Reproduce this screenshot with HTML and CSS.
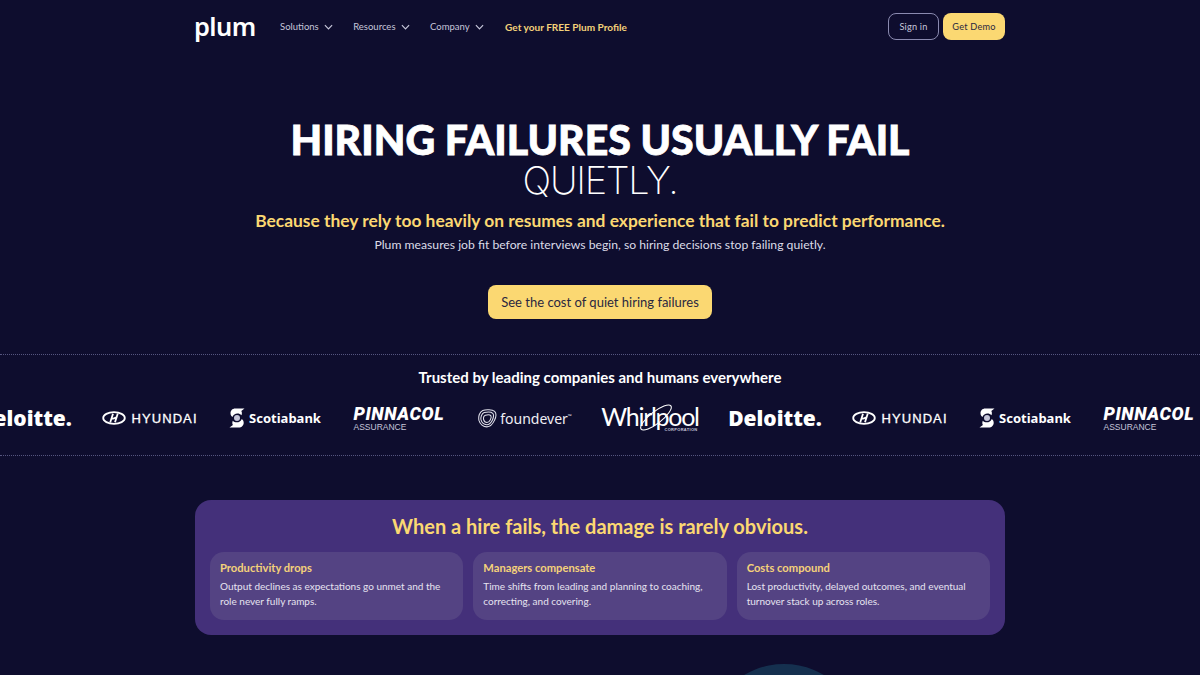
FILE: index.html
```html
<!DOCTYPE html>
<html lang="en">

<head>
    <meta charset="UTF-8">
    <title>Plum - Hiring failures usually fail quietly</title>
    <link rel="stylesheet" href="styles.css">
</head>

<body>

    <!-- Top Nav -->
    <header class="nav">
        <div class="nav-left">
            <a href="#" class="nav-logo">plum</a>
            <a href="#" class="nav-link">Solutions
                <svg class="chevron" viewBox="0 0 10 6"><path d="M1 1l4 4 4-4"/></svg>
            </a>
            <a href="#" class="nav-link">Resources
                <svg class="chevron" viewBox="0 0 10 6"><path d="M1 1l4 4 4-4"/></svg>
            </a>
            <a href="#" class="nav-link">Company
                <svg class="chevron" viewBox="0 0 10 6"><path d="M1 1l4 4 4-4"/></svg>
            </a>
            <a href="#" class="nav-promo">Get your FREE Plum Profile</a>
        </div>
        <div class="nav-right">
            <a href="#" class="btn-signin">Sign in</a>
            <a href="#" class="btn-demo">Get Demo</a>
        </div>
    </header>

    <!-- Hero -->
    <section class="hero">
        <h1 class="hero-title">HIRING FAILURES USUALLY FAIL</h1>
        <div class="hero-thin">QUIETLY.</div>
        <p class="hero-lead">Because they rely too heavily on resumes and experience that fail to predict performance.</p>
        <p class="hero-sub">Plum measures job fit before interviews begin, so hiring decisions stop failing quietly.</p>
        <a href="#" class="hero-btn">See the cost of quiet hiring failures</a>
    </section>

    <!-- Logo Strip -->
    <section class="trusted">
        <h2>Trusted by leading companies and humans everywhere</h2>
        <div class="logo-track">
            <div class="logo-cell"><span class="logo-deloitte">Deloitte.</span></div>
            <div class="logo-cell">
                <svg class="hyundai-mark" viewBox="0 0 24 14"><ellipse cx="12" cy="7" rx="10.800" ry="5.800"/><path d="M8.200 11.500L11 2.800M13 11.200l2.800-8.700M9.500 7.900c1.800-.2 3.300-.7 5-1.700"/></svg>
                <span class="logo-hyundai">HYUNDAI</span>
            </div>
            <div class="logo-cell">
                <svg class="scotia-mark" viewBox="0 0 16 20"><path d="M15.500 0.500H6.500C3 0.500 1.500 2.800 1.500 5.200c0 1.800.8 3 1.900 3.800 1-2.200 2.800-3.400 5-3.400 1.700 0 3 .6 4 1.600.4-.8.500-1.500.500-2.300 0-.8-.2-1.500-.6-2z"/><path d="M.5 19.500h9c3.500 0 5.200-2.300 5.200-4.800 0-1.800-.8-3-1.900-3.800-1 2.200-2.800 3.400-5 3.400-1.700 0-3-.6-4-1.600-.4.8-.5 1.500-.5 2.300 0 .8.200 1.500.6 2z"/><circle cx="8" cy="10" r="3" class="scotia-globe"/></svg>
                <span class="logo-scotia">Scotiabank</span>
            </div>
            <div class="logo-cell logo-stack">
                <span class="logo-pinnacol">PINNACOL</span>
                <span class="logo-assurance">ASSURANCE</span>
            </div>
            <div class="logo-cell">
                <svg class="foundever-mark" viewBox="0 0 20 20"><path d="M5 1.500c3.500-1.200 10-1 12.500 1 2 2 1.500 6-.2 9.500-1.600 3.500-4.300 6.800-8 6.800C5.800 18.800 2 16 1 12 .2 8 1.500 3 5 1.500z"/><path d="M6.500 3.800c3-.8 7.500-.7 9 .7 1.300 1.500.9 4.300-.3 7-1.300 2.800-3.400 5-6 5-2.500 0-5.200-2-6-5-.6-3 .7-6.700 3.300-7.700z"/><path d="M7.800 6.500c2.200-.5 5-.4 5.700.5.700 1 .3 2.700-.5 4.300-.9 1.800-2.100 3-3.600 3-1.500 0-3-1.200-3.500-3-.3-1.900.3-4.200 1.900-4.800z"/></svg>
                <span class="logo-foundever">foundever<sup>™</sup></span>
            </div>
            <div class="logo-cell logo-whirlpool-cell">
                <span class="logo-whirlpool">Whirlpool</span>
                <span class="logo-corp">CORPORATION</span>
                <svg class="whirlpool-swoosh" viewBox="0 0 40 34"><ellipse cx="20" cy="17" rx="21" ry="6.500" transform="rotate(-38 20 17)"/></svg>
            </div>
            <div class="logo-cell"><span class="logo-deloitte">Deloitte.</span></div>
            <div class="logo-cell">
                <svg class="hyundai-mark" viewBox="0 0 24 14"><ellipse cx="12" cy="7" rx="10.800" ry="5.800"/><path d="M8.200 11.500L11 2.800M13 11.200l2.800-8.700M9.500 7.900c1.800-.2 3.300-.7 5-1.700"/></svg>
                <span class="logo-hyundai">HYUNDAI</span>
            </div>
            <div class="logo-cell">
                <svg class="scotia-mark" viewBox="0 0 16 20"><path d="M15.500 0.500H6.500C3 0.500 1.500 2.800 1.500 5.200c0 1.800.8 3 1.900 3.800 1-2.200 2.800-3.400 5-3.400 1.700 0 3 .6 4 1.600.4-.8.500-1.500.500-2.300 0-.8-.2-1.500-.6-2z"/><path d="M.5 19.500h9c3.500 0 5.200-2.300 5.200-4.800 0-1.800-.8-3-1.900-3.800-1 2.200-2.800 3.400-5 3.400-1.700 0-3-.6-4-1.600-.4.8-.5 1.500-.5 2.300 0 .8.200 1.500.6 2z"/><circle cx="8" cy="10" r="3" class="scotia-globe"/></svg>
                <span class="logo-scotia">Scotiabank</span>
            </div>
            <div class="logo-cell logo-stack">
                <span class="logo-pinnacol">PINNACOL</span>
                <span class="logo-assurance">ASSURANCE</span>
            </div>
        </div>
    </section>

    <!-- Damage Panel -->
    <section class="damage">
        <h2>When a hire fails, the damage is rarely obvious.</h2>
        <div class="damage-grid">
            <div class="damage-card">
                <h3>Productivity drops</h3>
                <p>Output declines as expectations go unmet and the role never fully ramps.</p>
            </div>
            <div class="damage-card">
                <h3>Managers compensate</h3>
                <p>Time shifts from leading and planning to coaching, correcting, and covering.</p>
            </div>
            <div class="damage-card">
                <h3>Costs compound</h3>
                <p>Lost productivity, delayed outcomes, and eventual turnover stack up across roles.</p>
            </div>
        </div>
    </section>

    <!-- Next section, cut off by the fold -->
    <div class="next-peek"><div class="peek-circle"></div></div>

</body>

</html>
```

FILE: styles.css
```css
/* Global Styles */
html, body {
    height: 675px;
    overflow: hidden;
}

body {
    font-family: 'Lato', sans-serif;
    background: #0e0d2e;
    color: #fff;
    margin: 0;
}

a {
    text-decoration: none;
}

/* Top Nav */
.nav {
    width: 810px;
    height: 53px;
    margin: 0 auto;
    display: flex;
    align-items: center;
    justify-content: space-between;
}

.nav-left {
    display: flex;
    align-items: center;
}

.nav-logo {
    width: 85px;
    margin-left: -1px;
    margin-right: 1px;
    font-family: 'Noto Sans', sans-serif;
    font-size: 25.500px;
    font-weight: 600;
    line-height: 29px;
    letter-spacing: -0.6px;
    color: #fff;
}

.nav-link {
    display: flex;
    align-items: center;
    gap: 5px;
    margin-right: 20.500px;
    font-size: 9.500px;
    color: #c6c6da;
}

.chevron {
    width: 9px;
    height: 6px;
    fill: none;
    stroke: #c6c6da;
    stroke-width: 1.300;
}

.nav-promo {
    margin-left: 1px;
    font-size: 10.050px;
    font-weight: 700;
    color: #f4d27a;
}

.nav-right {
    display: flex;
    gap: 4px;
}

.btn-signin,
.btn-demo {
    height: 27px;
    display: flex;
    align-items: center;
    justify-content: center;
    box-sizing: border-box;
    border-radius: 8px;
    font-size: 9.200px;
    letter-spacing: 0.2px;
}

.btn-signin {
    width: 51px;
    border: 1px solid #8a8ab0;
    color: #c6c6da;
}

.btn-demo {
    width: 62px;
    background: #fbd872;
    color: #2a2740;
}

/* Hero */
.hero {
    height: 302px;
    box-sizing: border-box;
    padding-top: 66px;
    text-align: center;
    border-bottom: 1px dotted #55557f;
}

.hero-title {
    margin: 0;
    font-size: 41px;
    line-height: 41px;
    font-weight: 900;
    -webkit-text-stroke: 0.8px #fff;
}

.hero-thin {
    font-family: 'Inter', sans-serif;
    font-size: 38px;
    line-height: 40px;
    font-weight: 150;
    letter-spacing: -1.300px;
}

.hero-lead {
    margin: 9px 0 0;
    font-size: 17.400px;
    line-height: 24px;
    font-weight: 700;
    color: #fbd872;
}

.hero-sub {
    margin: 2px 0 0;
    font-size: 12.200px;
    line-height: 20px;
    color: #dcdce8;
}

.hero-btn {
    display: inline-block;
    margin-top: 30px;
    width: 224px;
    height: 34px;
    line-height: 34px;
    border-radius: 8px;
    background: #fbd872;
    color: #2a2740;
    font-size: 13px;
}

/* Logo Strip */
.trusted {
    height: 101px;
    box-sizing: border-box;
    padding-top: 12px;
    border-bottom: 1px dotted #55557f;
    overflow: hidden;
}

.trusted h2 {
    margin: 0;
    font-size: 15px;
    line-height: 20px;
    font-weight: 700;
    text-align: center;
}

.logo-track {
    display: flex;
    margin: 11px 0 0 -37.500px;
    width: 1250px;
}

.logo-cell {
    flex: 0 0 125px;
    height: 40px;
    display: flex;
    align-items: center;
    justify-content: center;
    position: relative;
}

.logo-stack {
    flex-direction: column;
    align-items: flex-start;
    padding-left: 16px;
    box-sizing: border-box;
}

.logo-deloitte {
    font-family: 'Noto Sans', sans-serif;
    font-size: 21px;
    font-weight: 900;
}

.hyundai-mark {
    width: 24px;
    height: 14px;
    margin-right: 5px;
    fill: none;
    stroke: #fff;
    stroke-width: 1.800;
}

.logo-hyundai {
    font-family: 'Liberation Sans', sans-serif;
    font-size: 13px;
    letter-spacing: 1.100px;
    -webkit-text-stroke: 0.3px #fff;
}

.scotia-mark {
    width: 16px;
    height: 20px;
    margin-right: 4px;
    fill: #fff;
}

.scotia-globe {
    fill: #c6c6da;
}

.logo-scotia {
    font-family: 'Noto Sans', sans-serif;
    font-size: 13px;
    font-weight: 700;
}

.logo-pinnacol {
    font-family: 'Roboto', sans-serif;
    font-size: 18px;
    line-height: 17px;
    font-weight: 900;
    font-style: italic;
    letter-spacing: 0.6px;
}

.logo-assurance {
    font-family: 'Liberation Sans', sans-serif;
    font-size: 8.500px;
    line-height: 10px;
    color: #c6c6da;
}

.foundever-mark {
    width: 19px;
    height: 19px;
    margin-right: 3px;
    fill: none;
    stroke: #e0e0ea;
    stroke-width: 1.100;
}

.logo-foundever {
    font-family: 'Noto Sans', sans-serif;
    font-size: 14px;
    color: #eeeef4;
}

.logo-foundever sup {
    font-size: 5px;
}

.logo-whirlpool {
    margin-bottom: 4px;
    font-size: 25px;
    font-weight: 400;
    letter-spacing: -1.300px;
}

.logo-corp {
    position: absolute;
    right: 15px;
    bottom: 6px;
    font-family: 'Liberation Sans', sans-serif;
    font-size: 4px;
    font-weight: 700;
    letter-spacing: 0.3px;
    color: #c6c6da;
}

.whirlpool-swoosh {
    position: absolute;
    left: 50px;
    top: 4px;
    width: 36px;
    height: 31px;
    fill: none;
    stroke: #fff;
    stroke-width: 1.200;
}

/* Damage Panel */
.damage {
    width: 810px;
    height: 135px;
    margin: 44px auto 0;
    box-sizing: border-box;
    padding: 14px 15px 15px;
    background: #44307a;
    border-radius: 16px;
}

.damage h2 {
    margin: 0;
    font-size: 20px;
    line-height: 24px;
    font-weight: 700;
    text-align: center;
    color: #fbd872;
}

.damage-grid {
    display: grid;
    grid-template-columns: repeat(3, 1fr);
    gap: 10px;
    margin-top: 14px;
}

.damage-card {
    height: 68px;
    box-sizing: border-box;
    padding: 8px 10px;
    background: #544383;
    border-radius: 14px;
}

.damage-card h3 {
    margin: 0;
    font-size: 11.200px;
    line-height: 15px;
    font-weight: 700;
    color: #f4d27a;
}

.damage-card p {
    margin: 4px 0 0;
    font-size: 10px;
    line-height: 15px;
    color: #e6e4f0;
}

/* Next section peek */
.next-peek {
    display: flex;
    justify-content: center;
    padding: 29px 0 0 368px;
}

.peek-circle {
    flex: none;
    width: 156px;
    height: 156px;
    border-radius: 50%;
    background: #15304f;
}
```
